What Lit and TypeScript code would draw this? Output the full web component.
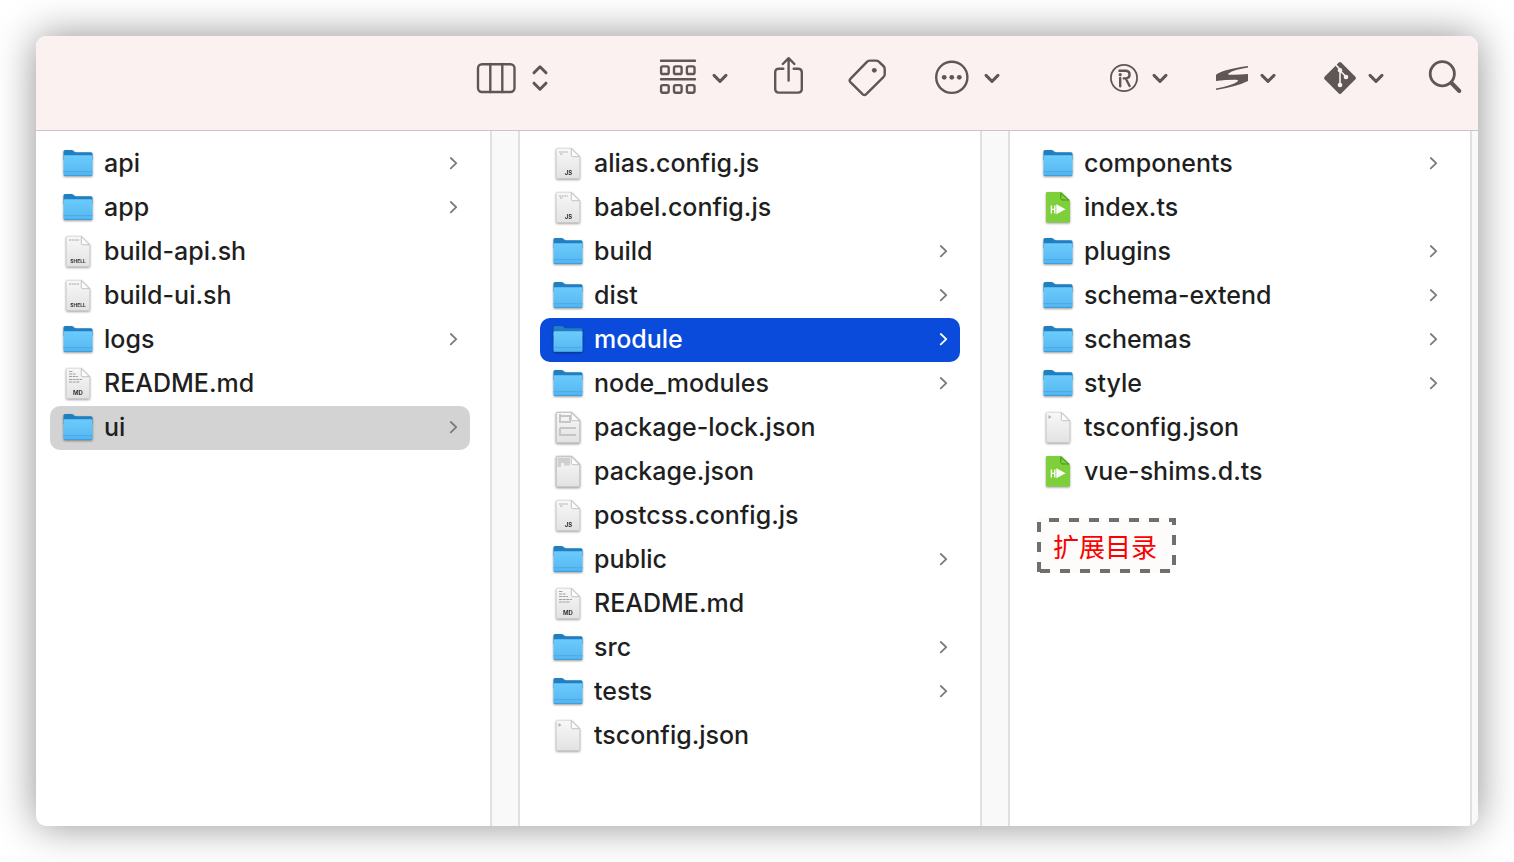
import { LitElement, html, svg, css, nothing } from "lit";
import { customElement, property } from "lit/decorators.js";
import { classMap } from "lit/directives/class-map.js";

type Kind = "folder" | "shell" | "md" | "js" | "json" | "lock" | "package" | "ts";
interface Entry {
  name: string;
  kind: Kind;
  state?: "path" | "active";
}

const f = (name: string, kind: Kind = "folder", state?: Entry["state"]): Entry => ({ name, kind, state });

const COLUMNS: Entry[][] = [
  [
    f("api"),
    f("app"),
    f("build-api.sh", "shell"),
    f("build-ui.sh", "shell"),
    f("logs"),
    f("README.md", "md"),
    f("ui", "folder", "path"),
  ],
  [
    f("alias.config.js", "js"),
    f("babel.config.js", "js"),
    f("build"),
    f("dist"),
    f("module", "folder", "active"),
    f("node_modules"),
    f("package-lock.json", "lock"),
    f("package.json", "package"),
    f("postcss.config.js", "js"),
    f("public"),
    f("README.md", "md"),
    f("src"),
    f("tests"),
    f("tsconfig.json", "json"),
  ],
  [
    f("components"),
    f("index.ts", "ts"),
    f("plugins"),
    f("schema-extend"),
    f("schemas"),
    f("style"),
    f("tsconfig.json", "json"),
    f("vue-shims.d.ts", "ts"),
  ],
];

@customElement("file-icon")
class FileIcon extends LitElement {
  @property() kind: Kind = "folder";

  static styles = css`
    :host { display: block; width: 32px; height: 32px; flex: none; }
    svg { display: block; overflow: visible; filter: drop-shadow(0 1px 1px rgba(0, 0, 0, 0.4)); }
    text { font-family: Inter, "Liberation Sans", sans-serif; font-weight: 700; fill: #333; text-anchor: middle; }
    .small { font-size: 5px; }
    .ext { font-size: 6px; }
  `;

  private folder() {
    return svg`
      <defs>
        <linearGradient id="front" x1="0" y1="0" x2="0" y2="1">
          <stop offset="0" stop-color="#6ccbfb"/><stop offset="1" stop-color="#55b7f2"/>
        </linearGradient>
      </defs>
      <path fill="#1f7fc0" d="M1.5 3.6Q1.5 2 3 2H9.6Q10.6 2 11.3 2.7L12.2 3.6Q12.9 4.2 14 4.2H29Q30.5 4.2 30.5 5.8V12H1.5Z"/>
      <path fill="url(#front)" d="M1.5 8.6Q1.5 7.2 3 7.2H29Q30.5 7.2 30.5 8.6V26.5Q30.5 28 29 28H3Q1.5 28 1.5 26.5Z"/>
      <path stroke="#45a3e0" stroke-width="0.8" d="M1.5 23.7H30.5"/>
      <path stroke="#3f9bd8" stroke-width="1" d="M2 27.4H30"/>`;
  }

  private sheet() {
    const { kind } = this;
    const soft = kind === "lock" || kind === "package";
    return svg`
      <defs>
        <linearGradient id="paper" x1="0" y1="0" x2="0" y2="1">
          <stop offset="0" stop-color="#f8f8f8"/><stop offset="1" stop-color="#e2e2e2"/>
        </linearGradient>
      </defs>
      <path fill="url(#paper)" stroke=${soft ? "#c8c8c8" : "#cfcfcf"} stroke-width=${soft ? 1.2 : 0.6}
        d="M5.3 0.3H19.5L27.7 8.5V29.5Q27.7 30.6 26.6 30.6H5.4Q4.3 30.6 4.3 29.5V1.3Q4.3 0.3 5.3 0.3Z"/>
      ${kind === "package" ? svg`<path fill="#cfcfcf" d="M5.5 1.5H18V9.5H12V7H9V11H5.5Z"/>` : nothing}
      ${kind === "lock" ? svg`<path stroke="#c6c6c6" stroke-width="2" d="M8 2V10H18V4H9M8 16H24M8 23H24M8 16V24"/>` : nothing}
      <path fill="#fdfdfd" stroke="#b4b4b4" stroke-width="0.8" stroke-linejoin="round" d="M19.3 0.6V7.2Q19.3 8.7 20.8 8.7H27.4Z"/>
      ${kind === "shell" ? svg`<path stroke="#a0a0a0" stroke-width="1" stroke-dasharray="2 .6" d="M7 4H17.5"/><text class="small" x="16" y="27">SHELL</text>` : nothing}
      ${kind === "js" ? svg`<path stroke="#a8a8a8" stroke-width="0.9" stroke-dasharray="2 .6" d="M7 4H16M8 6H11"/><text class="ext" x="16.5" y="27">JS</text>` : nothing}
      ${kind === "md" ? svg`<path stroke="#a0a0a0" stroke-width="1" stroke-dasharray="3 .6" d="M7 3.5H11M7 6H14M7 8.5H16M7 11.5H20M7 14H18"/><text class="ext" x="16" y="27">MD</text>` : nothing}
      ${kind === "json" ? svg`<path fill="#b0b0b0" d="M6.5 3L9.5 5L6.5 7Z"/>` : nothing}`;
  }

  private typescript() {
    return svg`
      <path fill="#7ed03b" d="M4.5 0H19.6L28 8.4V29.6Q28 30.6 27 30.6H5Q4 30.6 4 29.6V.5Z"/>
      <path fill="#7ed03b" stroke="#3f8a1c" stroke-width="0.9" stroke-linejoin="round" d="M18.8 1.2V6.6L20 8H26.8Z"/>
      <path fill="#fff" d="M14.3 12.3L23.6 17.3L14.3 22.3Z"/>
      <path stroke="#fff" stroke-width="1.4" d="M9.4 13.4V21.4M12.8 13.4V21.4M9.4 17.4H12.8"/>`;
  }

  render() {
    return html`<svg width="32" height="32" viewBox="0 0 32 32" fill="none" aria-hidden="true">
      ${this.kind === "folder" ? this.folder() : this.kind === "ts" ? this.typescript() : this.sheet()}
    </svg>`;
  }
}

const chevron = (x: number) => svg`<path class="bold" d="M${x} 19.4L${x + 6} 25.4L${x + 12} 19.4"/>`;

const TOOLS = [
  [
    {
      label: "View as columns",
      width: 74,
      art: svg`<rect x="2" y="8.2" width="36.5" height="27.8" rx="4"/><path d="M14.3 8V36M26.3 8V36"/>
        <path class="bold" d="M58 16.8L64 10.8L70 16.8M58 27.2L64 33.2L70 27.2"/>`,
    },
  ],
  [
    {
      label: "Group items",
      width: 72,
      art: svg`<path d="M3 4.7H37M3 23.3H37"/>
        ${[10.4, 29.1].map((y) => [3.1, 16, 28.9].map((x) => svg`<rect x=${x} y=${y} width="7.6" height="7.6" rx="1.6"/>`))}
        ${chevron(56)}`,
    },
    {
      label: "Share",
      width: 34,
      art: svg`<path d="M11.3 12.8H7Q3.2 12.8 3.2 16.3V33Q3.2 36.6 7 36.6H26Q29.8 36.6 29.8 33V16.3Q29.8 12.8 26 12.8H21.7M16.6 24.5V2.4M10.8 8L16.6 2.2L22.4 8"/>`,
    },
    {
      label: "Edit tags",
      width: 40,
      art: svg`<path d="M21.6 4.6H28Q29.7 4.6 30.8 5.7L35.4 10Q36.7 11.2 36.7 13V18.2Q36.7 20 35.4 21.2L18 38.3Q16.4 39.8 14.8 38.3L2.4 26.1Q.9 24.5 2.4 22.9L18.9 5.9Q20 4.6 21.6 4.6Z"/>
        <circle class="solid" cx="26.3" cy="14.3" r="2.4"/>`,
    },
    {
      label: "More actions",
      width: 72,
      art: svg`<circle cx="21.8" cy="21.3" r="15.6"/>
        <circle class="solid" cx="14.2" cy="21.3" r="2.4"/><circle class="solid" cx="21.8" cy="21.3" r="2.4"/><circle class="solid" cx="29.3" cy="21.3" r="2.4"/>
        ${chevron(56)}`,
    },
  ],
  [
    {
      label: "Registry",
      width: 60,
      art: svg`<circle class="thin" cx="14" cy="22" r="13.1"/>
        <path d="M9.4 14.8H16Q19.6 15 19.6 18.6Q19.6 22.2 16 22.4H13.8M16 23L19.6 30M10.2 22V30.2"/>
        <circle class="solid" cx="10.2" cy="18.7" r="1.6"/>
        ${chevron(44)}`,
    },
    {
      label: "Sublime",
      width: 66,
      art: svg`<path class="solid" d="M36 10V11.6Q22 13.8 16.5 17.4Q15.5 18.6 18 18.8Q27 19 36 18V25Q25 30.5 4 34V32.4Q20 29.5 25.5 25.4Q27 23.8 24 23.7Q14 23.6 4 25V18.7Q12 13 36 10Z"/>
        ${chevron(50)}`,
    },
    {
      label: "Git",
      width: 66,
      art: svg`<path class="solid" d="M18.8 6.6Q20 5.4 21.2 6.6L35.4 20.8Q36.6 22 35.4 23.2L21.2 37.4Q20 38.6 18.8 37.4L4.6 23.2Q3.4 22 4.6 20.8Z"/>
        <path class="cut" d="M15 8L20 13.4V29M20 14.5L26 20.8"/>
        <circle class="hole" cx="20" cy="14.3" r="2.2"/><circle class="hole" cx="20" cy="29" r="2.3"/><circle class="hole" cx="26" cy="21" r="2.3"/>
        ${chevron(50)}`,
    },
    {
      label: "Search",
      width: 36,
      art: svg`<circle class="mid" cx="14.3" cy="17.8" r="12.1"/><path class="heavy" d="M23.5 27L31.3 35"/>`,
    },
  ],
];

@customElement("finder-toolbar")
class FinderToolbar extends LitElement {
  static styles = css`
    :host {
      display: flex;
      justify-content: flex-end;
      align-items: center;
      gap: 108px;
      padding: 20px 14px 30px;
      background: #fbf1f0;
      border-bottom: 1px solid #c9c6c6;
    }
    .cluster { display: flex; gap: 42px; }
    button { display: block; padding: 0; border: 0; background: none; color: #5f5756; }
    svg { display: block; fill: none; stroke: currentColor; stroke-width: 2.4px; stroke-linecap: round; stroke-linejoin: round; }
    .bold { stroke-width: 3px; }
    .mid { stroke-width: 2.8px; }
    .heavy { stroke-width: 4px; }
    .thin { stroke-width: 1.8px; }
    .solid { fill: currentColor; stroke: none; }
    .cut { stroke: #fbf1f0; stroke-width: 1.6px; }
    .hole { fill: #fbf1f0; stroke: none; }
  `;

  render() {
    return TOOLS.map(
      (cluster) => html`<div class="cluster">
        ${cluster.map(
          (t) => html`<button type="button" aria-label=${t.label}>
            <svg width=${t.width} height="44" viewBox="0 0 ${t.width} 44" aria-hidden="true">${t.art}</svg>
          </button>`
        )}
      </div>`
    );
  }
}

@customElement("finder-column")
class FinderColumn extends LitElement {
  @property({ attribute: false }) entries: Entry[] = [];

  static styles = css`
    :host { display: block; }
    ul { list-style: none; margin: 0; padding: 0; }
    .row {
      display: flex;
      align-items: center;
      gap: 10px;
      box-sizing: border-box;
      width: 100%;
      height: 44px;
      padding: 0 12px;
      border: 0;
      border-radius: 10px;
      background: none;
      color: #1f1f1f;
      font: 500 25px/42px Inter, "Liberation Sans", sans-serif;
      text-align: left;
    }
    .name { flex: 1; min-width: 0; padding-bottom: 2px; overflow: hidden; text-overflow: ellipsis; white-space: nowrap; }
    .path { background: #d3d3d3; }
    .active { background: #0a4bdc; color: #fff; }
    .arrow { flex: none; fill: none; stroke: #7b7b7b; stroke-width: 1.8px; stroke-linecap: round; stroke-linejoin: round; }
    .active .arrow { stroke: #fff; }
  `;

  render() {
    return html`<ul>
      ${this.entries.map(
        (e) => html`<li>
          <button type="button" class=${classMap({ row: true, path: e.state === "path", active: e.state === "active" })}>
            <file-icon .kind=${e.kind}></file-icon>
            <span class="name">${e.name}</span>
            ${e.kind === "folder"
              ? html`<svg class="arrow" width="10" height="14" viewBox="0 0 10 14" aria-hidden="true"><path d="M2.8 1L8.2 6.2L2.8 11.4"/></svg>`
              : nothing}
          </button>
        </li>`
      )}
    </ul>`;
  }
}

@customElement("app-root")
class AppRoot extends LitElement {
  static styles = css`
    :host { display: flex; box-sizing: border-box; min-height: 100vh; padding: 36px; background: #fff; }
    .window {
      flex: 1;
      display: flex;
      flex-direction: column;
      min-width: 0;
      overflow: hidden;
      border-radius: 10px;
      background: #fff;
      box-shadow: 0 0 40px rgba(0, 0, 0, 0.44);
    }
    .browser { flex: 1; display: flex; }
    .pane { flex: 1 1 460px; min-width: 0; box-sizing: border-box; padding: 11px 20px; }
    .first { flex-basis: 454px; padding-left: 14px; }
    .gutter { flex: none; width: 26px; background: #f9f9f9; border: solid #e0e0e0; border-width: 0 2px; }
    .last { width: 6px; border-right-width: 0; }
    .note {
      position: relative;
      display: inline-block;
      margin: 24px 0 0 7px;
      padding: 1px 19px 0 16px;
      background: #fdfcfa;
      color: #fa0000;
      font: 26px/54px "Noto Sans CJK SC", sans-serif;
    }
    .dashes { position: absolute; inset: 0; width: 100%; height: 100%; fill: none; stroke: #6f6f6f; stroke-width: 4px; stroke-dasharray: 10 10; }
    .lead { stroke-dashoffset: 10px; }
  `;

  render() {
    return html`<main class="window">
      <finder-toolbar></finder-toolbar>
      <div class="browser">
        <div class="pane first"><finder-column .entries=${COLUMNS[0]}></finder-column></div>
        <div class="gutter"></div>
        <div class="pane"><finder-column .entries=${COLUMNS[1]}></finder-column></div>
        <div class="gutter"></div>
        <div class="pane">
          <finder-column .entries=${COLUMNS[2]}></finder-column>
          <div class="note">
            <svg class="dashes" viewBox="0 0 139 55" preserveAspectRatio="none" aria-hidden="true">
              <path class="lead" d="M2 2H137V53H2"/><path d="M2 54V0"/>
            </svg>
            扩展目录
          </div>
        </div>
        <div class="gutter last"></div>
      </div>
    </main>`;
  }
}
